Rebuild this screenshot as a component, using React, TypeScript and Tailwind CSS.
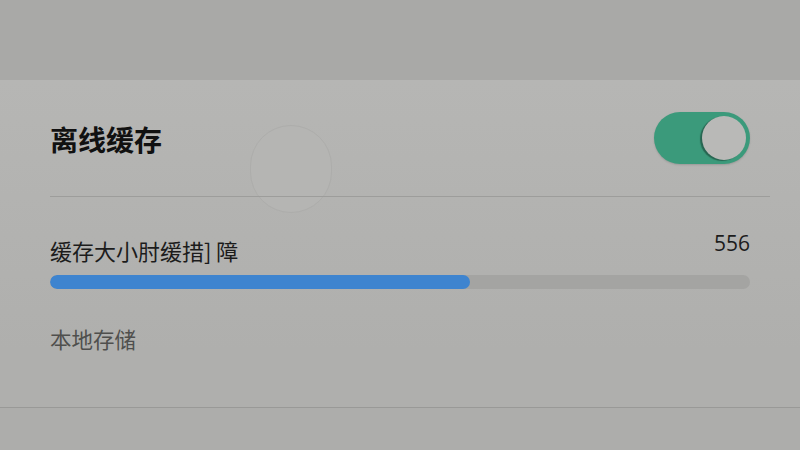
import React from "react";

const font = { fontFamily: '"Noto Sans CJK SC", "Noto Sans", sans-serif' };

export default function App() {
  const used = 0.6;
  return (
    <div
      className="w-[800px] h-[450px] overflow-hidden flex flex-col bg-[#b3b3b1]"
      style={font}
    >
      {/* header band */}
      <div className="h-[80px] bg-[#a9a9a7] shrink-0" />

      {/* settings card */}
      <div className="relative flex flex-col px-[50px] bg-gradient-to-b from-[#b6b6b4] to-[#afafad]">
        {/* touch ripple */}
        <div className="absolute left-[250px] top-[45px] w-[82px] h-[88px] rounded-full bg-[#b5b5b3] border border-[#adadab]" />

        <div className="relative flex items-center justify-between h-[116px]">
          <span className="text-[28px] font-bold text-[#111] leading-none pt-[2px]">
            离线缓存
          </span>
          <div className="w-[96px] h-[52px] rounded-full bg-[#3b9a7b] flex items-center justify-end pr-[4px] shadow-[0_1px_2px_rgba(0,0,0,0.15)]">
            <div className="w-[44px] h-[44px] rounded-full bg-[#b9b9b7] shadow-[-2px_1px_1px_rgba(0,0,0,0.35)]" />
          </div>
        </div>

        <div className="relative h-px bg-[#9d9d9b] -mr-[20px]" />

        <div className="relative flex items-end justify-between mt-[36px]">
          <span className="text-[22px] text-[#1c1c1c] leading-none">
            缓存大小肘缓措] 障
          </span>
          <span
            className="text-[21px] text-[#1c1c1c] leading-none mb-[7px]"
            style={{ fontFamily: '"Open Sans", "Noto Sans", sans-serif' }}
          >
            556
          </span>
        </div>

        <div className="relative mt-[14px] h-[14px] rounded-full bg-[#a4a4a2] overflow-hidden">
          <div
            className="h-full rounded-full bg-[#3e84cf]"
            style={{ width: `${used * 100}%` }}
          />
        </div>

        <div className="relative mt-[39px] text-[21.5px] text-[#4f4f4d] leading-none">
          本地存储
        </div>
      </div>

      <div className="h-[57px] bg-[#afafad]" />
      <div className="h-px bg-[#999997]" />
      <div className="flex-1 bg-[#adadab]" />
    </div>
  );
}
